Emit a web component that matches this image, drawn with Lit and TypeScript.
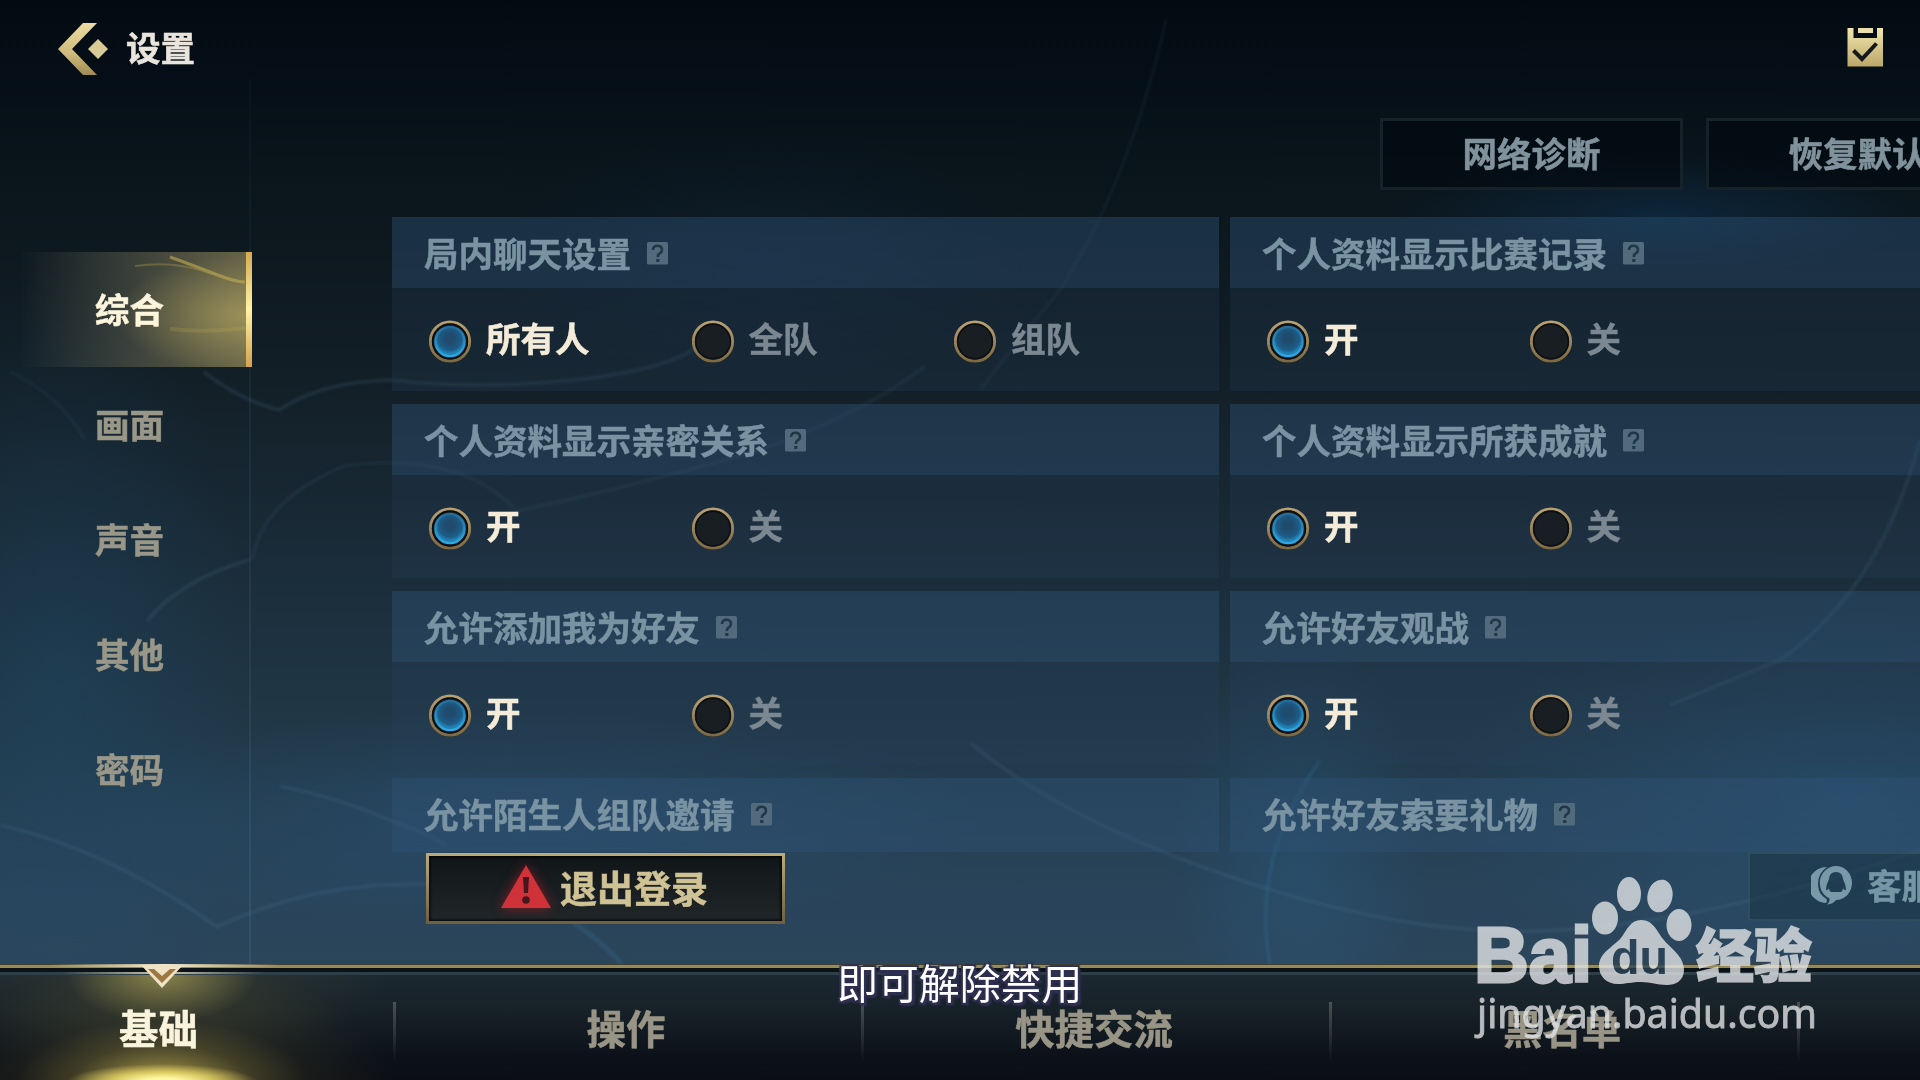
import { LitElement, css, html, svg } from 'lit';
import { customElement, property } from 'lit/decorators.js';
import { classMap } from 'lit/directives/class-map.js';

interface Setting {
  title: string;
  options: string[];
}

const SIDE_TABS = ['综合', '画面', '声音', '其他', '密码'];
const BOTTOM_TABS = ['基础', '操作', '快捷交流', '黑名单'];

const SETTINGS: Setting[] = [
  { title: '局内聊天设置', options: ['所有人', '全队', '组队'] },
  { title: '个人资料显示比赛记录', options: ['开', '关'] },
  { title: '个人资料显示亲密关系', options: ['开', '关'] },
  { title: '个人资料显示所获成就', options: ['开', '关'] },
  { title: '允许添加我为好友', options: ['开', '关'] },
  { title: '允许好友观战', options: ['开', '关'] },
  { title: '允许陌生人组队邀请', options: [] },
  { title: '允许好友索要礼物', options: [] },
];

@customElement('setting-card')
export class SettingCard extends LitElement {
  @property({ attribute: false }) setting: Setting = { title: '', options: [] };

  static styles = css`
    :host {
      display: flex;
      flex-direction: column;
      background: rgba(40, 68, 98, 0.24);
    }

    .head {
      display: flex;
      flex: none;
      align-items: center;
      gap: 15px;
      height: 71px;
      padding-left: 32px;
      box-sizing: border-box;
      font-size: 34.5px;
      font-weight: 700;
      line-height: 1;
      color: #7993a2;
      background: rgba(56, 98, 136, 0.24);
    }

    .head.last {
      height: 74px;
      padding-bottom: 3px;
    }

    .head span {
      margin-top: -1px;
    }

    .help {
      display: block;
      width: 23px;
      height: 23px;
      margin-top: 1px;
    }

    .options {
      display: flex;
      padding: 31px 0 0 37px;
    }

    .option {
      display: flex;
      align-items: center;
      gap: 14px;
      width: 262.5px;
      height: 44px;
      font-size: 34.5px;
      font-weight: 700;
      line-height: 1;
      color: #7b8791;
      white-space: nowrap;
    }

    .option span {
      margin-top: -7px;
    }

    .option.checked {
      color: #f4ecd8;
    }

    .ring {
      display: block;
      flex: none;
      width: 43px;
      height: 44px;
    }
  `;

  private _ring(checked: boolean) {
    return html`
      <svg class="ring" viewBox="0 0 43 44">
        <defs>
          <linearGradient id="gold" x1="0" y1="0" x2="0" y2="1">
            <stop offset="0" stop-color="#b8a071" />
            <stop offset="1" stop-color="#7d6a43" />
          </linearGradient>
          <radialGradient id="lamp" cy="0.4">
            <stop offset="0.3" stop-color="#1f4b6d" />
            <stop offset="0.8" stop-color="#1d5d88" />
            <stop offset="1" stop-color="#2280b4" />
          </radialGradient>
          <linearGradient id="rim" x1="0" y1="0" x2="0" y2="1">
            <stop offset="0" stop-color="#236d9c" />
            <stop offset="1" stop-color="#2cabe6" />
          </linearGradient>
        </defs>
        <circle cx="21" cy="23" r="21" fill="#0b1015" opacity="0.4" />
        <circle cx="21" cy="22.5" r="19.6" fill="#191e23" stroke="url(#gold)" stroke-width="3" />
        <circle cx="21" cy="22.5" r="17.4" fill="none" stroke="#0b0f13" stroke-width="1.6" />
        ${checked
          ? svg`<circle cx="21" cy="22.5" r="14.6" fill="url(#lamp)" stroke="url(#rim)" stroke-width="2.4" />`
          : ''}
      </svg>
    `;
  }

  render() {
    const { title, options } = this.setting;
    return html`
      <div class="head ${classMap({ last: !options.length })}">
        <span>${title}</span>
        <svg class="help" viewBox="0 0 23 23">
          <rect x="1" width="21" height="22.5" rx="1.5" fill="#526b7c" />
          <path d="M7 8Q7 3.8 11.5 3.8T16 8Q16 10 13.6 11.4Q11.8 12.5 11.8 15" fill="none" stroke="#203748" stroke-width="2.6" />
          <rect x="10.2" y="17" width="3.2" height="3" fill="#203748" />
        </svg>
      </div>
      ${options.length
        ? html`<div class="options">
            ${options.map(
              (label, i) => html`
                <div class="option ${classMap({ checked: i === 0 })}">
                  ${this._ring(i === 0)}<span>${label}</span>
                </div>
              `
            )}
          </div>`
        : ''}
    `;
  }
}

@customElement('app-root')
export class AppRoot extends LitElement {
  static styles = css`
    :host {
      display: block;
      position: relative;
      width: 1920px;
      height: 1080px;
      overflow: hidden;
      font-family: 'Noto Sans CJK SC', 'Noto Sans', sans-serif;
      -webkit-text-stroke: 0.5px currentColor;
      background:
        radial-gradient(ellipse 270px 60px at 1660px 215px, rgba(14, 56, 92, 0.45), transparent),
        radial-gradient(ellipse 190px 420px at 60px 690px, rgba(32, 88, 128, 0.25), transparent),
        radial-gradient(ellipse 420px 190px at 1850px 800px, rgba(44, 104, 152, 0.32), transparent),
        radial-gradient(ellipse 130px 230px at 1300px 860px, rgba(42, 108, 156, 0.25), transparent),
        radial-gradient(ellipse 480px 110px at 520px 820px, rgba(44, 96, 142, 0.3), transparent),
        radial-gradient(ellipse 260px 130px at 760px 260px, rgba(20, 56, 90, 0.2), transparent),
        linear-gradient(#030a12 0%, #061018 9%, #0a151c 17%, #131f27 35%, #1a2c39 52%, #213848 68%, #29445a 83%, #2b455b 90%);
    }

    .scenery {
      position: absolute;
      inset: 0;
      width: 1920px;
      height: 1080px;
    }

    .page {
      position: relative;
      display: flex;
      flex-direction: column;
      height: 1080px;
    }

    .top {
      display: flex;
      align-items: center;
      box-sizing: border-box;
      height: 98px;
      padding: 0 36px 0 55px;
      font-size: 34.5px;
      font-weight: 700;
      line-height: 1;
      color: #eae5dc;
    }

    .top span {
      margin-top: -5px;
    }

    .back {
      width: 56px;
      height: 56px;
      margin-right: 15px;
    }

    .clip {
      width: 37px;
      height: 40px;
      margin: -4px 0 0 auto;
    }

    .middle {
      display: flex;
      height: 866px;
    }

    .side {
      box-sizing: border-box;
      flex: none;
      width: 252px;
      padding-top: 154px;
    }

    .side-tab {
      position: relative;
      display: flex;
      align-items: center;
      box-sizing: border-box;
      height: 115px;
      padding-left: 95px;
      font-size: 34.5px;
      font-weight: 700;
      line-height: 1;
      color: #989788;
    }

    .side-tab.active {
      color: #fdf6dd;
      border-right: 6px solid;
      border-image: linear-gradient(#d3a94f, #fff3a6 50%, #d3a04d) 1;
      background:
        radial-gradient(ellipse 130px 60px at 100% 55%, rgba(190, 176, 100, 0.6), transparent),
        linear-gradient(90deg, transparent 18px, rgba(80, 84, 72, 0.55) 110px, rgba(112, 107, 76, 0.9));
    }

    .wisp {
      position: absolute;
      left: 0;
      top: 0;
      width: 246px;
      height: 115px;
    }

    .side-tab span {
      position: relative;
      margin-top: -2px;
    }

    .content {
      flex: none;
      width: 1668px;
      padding-left: 140px;
      box-sizing: border-box;
      overflow: hidden;
    }

    .actions {
      display: flex;
      gap: 23px;
      height: 72px;
      margin: 20px 0 27px 988px;
    }

    .action {
      display: flex;
      flex: none;
      align-items: center;
      justify-content: center;
      box-sizing: border-box;
      width: 303px;
      height: 72px;
      padding-bottom: 4px;
      border: 3px solid #152229;
      font-size: 34.5px;
      font-weight: 700;
      line-height: 1;
      color: #80939d;
      background: rgba(2, 8, 15, 0.6);
    }

    .grid {
      display: grid;
      grid-template-columns: 827px 827px;
      grid-template-rows: repeat(3, 174px) 74px;
      gap: 13px 11px;
    }

    .foot {
      display: flex;
      justify-content: space-between;
      padding-left: 34px;
      margin-top: 1px;
    }

    .logout {
      display: flex;
      align-items: center;
      box-sizing: border-box;
      width: 359px;
      height: 71px;
      padding-left: 69px;
      border: 3px solid;
      border-image: linear-gradient(#bba976, #6f6040) 1;
      background: linear-gradient(#101518, #212629);
      box-shadow: inset 0 0 3px 1px #000;
      font-size: 37px;
      font-weight: 700;
      line-height: 1;
      color: #cfc295;
    }

    .logout span {
      margin-top: -3px;
    }

    .alert {
      width: 56px;
      height: 54px;
      margin: -6px 6px 0 0;
      filter: drop-shadow(0 0 6px rgba(220, 30, 40, 0.55));
    }

    .service {
      display: flex;
      flex: none;
      align-items: center;
      box-sizing: border-box;
      width: 303px;
      height: 69px;
      margin: -1px -131px 0 0;
      padding: 0 0 3px 61px;
      border: 2px solid rgba(80, 120, 135, 0.3);
      background: rgba(24, 48, 64, 0.5);
      font-size: 34.5px;
      font-weight: 700;
      line-height: 1;
      color: #7496a5;
    }

    .service svg {
      width: 42px;
      height: 40px;
      margin-right: 14px;
    }

    .service span {
      margin-top: -2px;
    }

    .tabs {
      position: relative;
      display: flex;
      height: 116px;
      box-sizing: border-box;
      padding-top: 4px;
      background:
        linear-gradient(#3f4133 0 1px, #978a55 1px 4px, #0b1318 4px 8px, #2f3f47 8px 11px, transparent 11px),
        linear-gradient(#1c2a33, #172128 40%, #0c1119 80%, #0b0e15);
    }

    .tab {
      display: flex;
      align-items: center;
      justify-content: center;
      box-sizing: border-box;
      flex: none;
      width: 468px;
      height: 112px;
      padding: 5px 8px 0 0;
      font-size: 39.4px;
      font-weight: 700;
      line-height: 1;
      color: #989586;
      background: linear-gradient(rgba(110, 110, 105, 0.6), rgba(110, 110, 105, 0)) right 34px / 3px 60px no-repeat;
    }

    .tab.active {
      width: 396px;
      padding-right: 79px;
      color: #fbf4dc;
    }

    .tab span {
      position: relative;
    }

    .glow {
      position: absolute;
      left: 0;
      top: 11px;
      width: 396px;
      height: 105px;
      background:
        radial-gradient(ellipse 95px 18px at 162px 107px, #fff9a6 20%, rgba(250, 232, 110, 0.7) 55%, rgba(230, 210, 90, 0)),
        radial-gradient(ellipse 145px 62px at 162px 107px, rgba(205, 185, 85, 0.75), rgba(150, 135, 60, 0.25) 60%, transparent),
        radial-gradient(ellipse 230px 120px at 162px 107px, rgba(110, 100, 50, 0.4), transparent),
        radial-gradient(ellipse 95px 48px at 162px 0, rgba(176, 164, 90, 0.7), transparent),
        radial-gradient(ellipse 230px 80px at 162px 0, rgba(95, 90, 50, 0.35), transparent);
    }

    .marker {
      position: absolute;
      left: 0;
      top: 0;
      width: 396px;
      height: 30px;
    }

    .caption {
      position: absolute;
      left: 837px;
      top: 960px;
      font-size: 40.9px;
      line-height: 44px;
      color: #fff;
      white-space: nowrap;
      -webkit-text-stroke: 0;
      text-shadow: 2px 2px 1px #2f2f50, -2px -1px 1px #2f2f50, 2px -2px 1px #2f2f50, -2px 2px 1px #2f2f50, 3px 3px 2px #2f2f50, 0 3px 2px #2f2f50;
    }

    .watermark {
      position: absolute;
      left: 1459px;
      top: 865px;
      width: 370px;
      height: 180px;
      opacity: 0.78;
      -webkit-text-stroke: 0;
    }
  `;

  private _scenery() {
    return html`
      <svg class="scenery" viewBox="0 0 1920 1080">
        <defs>
          <filter id="soft"><feGaussianBlur stdDeviation="1.6" /></filter>
          <linearGradient id="edge" gradientUnits="userSpaceOnUse" x1="0" y1="80" x2="0" y2="964">
            <stop offset="0" stop-color="#4a7890" stop-opacity="0.05" />
            <stop offset="1" stop-color="#4a7890" stop-opacity="0.25" />
          </linearGradient>
        </defs>
        <g fill="none" stroke="#54809c" stroke-width="3" opacity="0.22" filter="url(#soft)">
          <path d="M10 372Q60 395 85 440" opacity="0.5" />
          <path d="M204 372Q240 400 279 410Q320 382 390 380Q480 390 574 380T700 345" />
          <path d="M1166 20Q1130 180 1060 290Q1010 350 980 390" opacity="0.5" />
          <path d="M252 560Q262 500 344 466Q460 450 517 511Q640 485 760 450Q870 410 925 366" opacity="0.6" />
          <path d="M147 621Q180 580 249 560" />
          <path d="M280 786Q340 798 392 821Q430 834 446 846" />
          <path d="M574 923Q600 940 622 964" stroke="#4a9ccc" stroke-width="5" opacity="0.7" />
          <path d="M0 825Q110 850 217 927Q310 882 427 884" />
          <path d="M970 742Q1060 820 1240 880T1560 930Q1720 920 1920 850" />
          <path d="M1920 440Q1880 590 1780 660L1670 705" />
          <path d="M1320 760Q1250 860 1270 964" stroke="#3b8bc0" />
        </g>
        <rect x="249" y="80" width="2" height="884" fill="url(#edge)" />
      </svg>
    `;
  }

  private _watermark() {
    return html`
      <svg class="watermark" viewBox="0 0 370 180" fill="#e6e8ea">
        <text x="15" y="117" font-size="78" font-family="'Liberation Sans', Arial, sans-serif" font-weight="700" textLength="118" lengthAdjust="spacingAndGlyphs" stroke="#e6e8ea" stroke-width="3">Bai</text>
        <ellipse cx="146" cy="53" rx="13" ry="16.5" />
        <ellipse cx="170" cy="29" rx="12" ry="17" />
        <ellipse cx="201" cy="31" rx="12.5" ry="16.5" transform="rotate(12 201 31)" />
        <ellipse cx="220" cy="60" rx="12.5" ry="16" />
        <path d="M182 55C194 55 198 66 204 74C212 84 225 91 225 105C225 116 216 120 208 120C197 120 193 117 182 117C172 117 167 119 159 119C147 119 140 111 140 101C140 88 154 82 162 73C168 64 172 55 182 55Z" />
        <text x="152" y="109" font-size="49" fill="#2c4557" font-family="'Liberation Sans', Arial, sans-serif" font-weight="700" textLength="57" lengthAdjust="spacingAndGlyphs">du</text>
        <text x="237" y="112" font-size="58" font-family="'Noto Sans CJK SC', sans-serif" font-weight="900" textLength="116" lengthAdjust="spacingAndGlyphs" stroke="#e6e8ea" stroke-width="1.6">经验</text>
        <text x="18" y="163" font-size="40" font-family="'Noto Sans', sans-serif" textLength="340" lengthAdjust="spacingAndGlyphs" stroke="#e6e8ea" stroke-width="0.8">jingyan.baidu.com</text>
      </svg>
    `;
  }

  render() {
    return html`
      ${this._scenery()}
      <div class="page">
        <header class="top">
          <svg class="back" viewBox="0 0 56 56">
            <defs>
              <linearGradient id="brass" x1="0" y1="0" x2="0" y2="1">
                <stop offset="0" stop-color="#ecdca2" />
                <stop offset="0.6" stop-color="#cdb97b" />
                <stop offset="1" stop-color="#a08c50" />
              </linearGradient>
            </defs>
            <path d="M28 2H42L17 28L42 54H28L3 28Z" fill="url(#brass)" />
            <path d="M43 18L53 28L43 38L33 28Z" fill="#d9cb97" />
          </svg>
          <span>设置</span>
          <svg class="clip" viewBox="0 0 37 40">
            <defs>
              <linearGradient id="paper" x1="0" y1="0" x2="0" y2="1">
                <stop offset="0" stop-color="#f2e6b0" />
                <stop offset="1" stop-color="#bba768" />
              </linearGradient>
            </defs>
            <path d="M0.5 1H6.5V11H30V1H36V39.5H0.5Z" fill="url(#paper)" />
            <rect x="11" y="1" width="15" height="5" fill="#ecdfae" />
            <path d="M6.5 23.5L15 32L29.5 16.5" fill="none" stroke="#15191b" stroke-width="4" />
          </svg>
        </header>

        <div class="middle">
          <nav class="side">
            ${SIDE_TABS.map(
              (label, i) => html`
                <div class="side-tab ${classMap({ active: i === 0 })}">
                  ${i === 0
                    ? html`<svg class="wisp" viewBox="0 0 246 115" fill="none" stroke="#c4ae50" stroke-width="2" opacity="0.6">
                        <path d="M170 5Q195 14 215 22T245 30" stroke-width="3" />
                        <path d="M135 14Q175 8 212 22" opacity="0.5" />
                        <path d="M170 77Q205 81 246 76" stroke-width="4" opacity="0.35" />
                      </svg>`
                    : ''}
                  <span>${label}</span>
                </div>
              `
            )}
          </nav>

          <main class="content">
            <div class="actions">
              <div class="action">网络诊断</div>
              <div class="action">恢复默认</div>
            </div>
            <div class="grid">
              ${SETTINGS.map((s) => html`<setting-card .setting=${s}></setting-card>`)}
            </div>
            <div class="foot">
              <div class="logout">
                <svg class="alert" viewBox="0 0 56 54">
                  <path d="M28 6L53 49H3Z" fill="#cf3339" />
                  <path d="M25 18H31L30 34H26Z" fill="#45161a" />
                  <circle cx="28" cy="41" r="3.8" fill="#45161a" />
                </svg>
                <span>退出登录</span>
              </div>
              <div class="service">
                <svg viewBox="0 0 42 40" fill="#7899a8">
                  <path d="M16 2A18 18 0 0 0 15 38Q16.5 36.5 15.5 34A16 17 0 0 1 7 19Q7 8 16 2Z" />
                  <path
                    fill-rule="evenodd"
                    d="M25 1A16 17 0 0 1 25 35Q22 39 16 39.5Q19 37 18.5 33.5A16.5 17 0 0 1 25 1ZM25 7Q18.5 7 18 14Q15 20 15 25Q16 26 18 23.5Q18.5 26 20 27H30Q31.5 26 32 23.5Q34 26 35 25Q35 20 32 14Q31.5 7 25 7Z"
                  />
                </svg>
                <span>客服</span>
              </div>
            </div>
          </main>
        </div>

        <nav class="tabs">
          <div class="glow"></div>
          <svg class="marker" viewBox="0 0 396 30">
            <defs>
              <linearGradient id="line">
                <stop offset="0" stop-color="#f0e6b8" stop-opacity="0" />
                <stop offset="0.5" stop-color="#f6ecd0" />
                <stop offset="1" stop-color="#f0e6b8" stop-opacity="0" />
              </linearGradient>
            </defs>
            <path d="M50 0H280V3H50Z" fill="url(#line)" />
            <path d="M60 8H265V10H60Z" fill="url(#line)" opacity="0.8" />
            <path d="M141 1H183L162 24Z" fill="#f0e2c4" />
            <path d="M148 5H154L162 12L170 5H176L162 19Z" fill="#9c7843" />
          </svg>
          ${BOTTOM_TABS.map(
            (label, i) => html`
              <div class="tab ${classMap({ active: i === 0 })}"><span>${label}</span></div>
            `
          )}
        </nav>
      </div>
      <div class="caption">即可解除禁用</div>
      ${this._watermark()}
    `;
  }
}
